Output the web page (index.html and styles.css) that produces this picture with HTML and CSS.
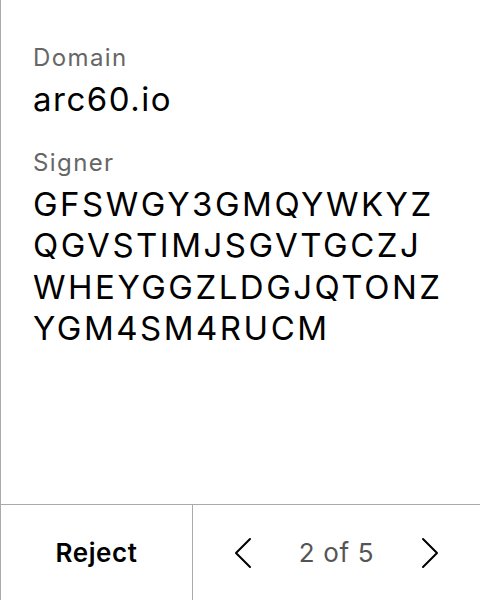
FILE: index.html
```html
<!DOCTYPE html>
<html>
<head>
<meta charset="utf-8">
<link rel="stylesheet" href="styles.css">
</head>
<body>
<div class="frame">
  <div class="content">
    <div class="field">
      <div class="label">Domain</div>
      <div class="value value-domain">arc60.io</div>
    </div>
    <div class="field">
      <div class="label">Signer</div>
      <div class="value value-key">GFSWGY3GMQYWKYZQGVSTIMJSGVTGCZJWHEYGGZLDGJQTONZYGM4SM4RUCM</div>
    </div>
  </div>
  <div class="footer">
    <button class="reject">Reject</button>
    <div class="pager">
      <button class="nav" aria-label="Previous">
        <svg width="18" height="32" viewBox="0 0 18 32"><path d="M16 2 L2 16 L16 30" fill="none" stroke="#000" stroke-width="2" stroke-linecap="round" stroke-linejoin="round"/></svg>
      </button>
      <span class="count">2 of 5</span>
      <button class="nav" aria-label="Next">
        <svg width="18" height="32" viewBox="0 0 18 32"><path d="M2 2 L16 16 L2 30" fill="none" stroke="#000" stroke-width="2" stroke-linecap="round" stroke-linejoin="round"/></svg>
      </button>
    </div>
  </div>
</div>
</body>
</html>
```

FILE: styles.css
```css
html, body {
  margin: 0;
  padding: 0;
  background: #fff;
}
body {
  font-family: Inter, "Noto Sans", sans-serif;
  color: #000;
}
.frame {
  height: 600px;
  border-left: 1px solid #aaa;
  display: flex;
  flex-direction: column;
  box-sizing: border-box;
}
.content {
  flex: 1;
  padding: 41px 32px 0;
  display: flex;
  flex-direction: column;
  gap: 25px;
}
.field {
  display: flex;
  flex-direction: column;
  gap: 4px;
}
.label {
  font-size: 24px;
  line-height: 34px;
  letter-spacing: 1.4px;
  color: #666;
}
.value {
  font-size: 33px;
  line-height: 41.5px;
  color: #000;
}
.value-domain {
  letter-spacing: 1.5px;
}
.value-key {
  width: 414px;
  letter-spacing: 2.5px;
  word-break: break-all;
}
.footer {
  height: 96px;
  border-top: 1px solid #aaa;
  display: grid;
  grid-template-columns: 192px 1fr;
  box-sizing: border-box;
}
button {
  font-family: inherit;
  background: none;
  border: none;
  padding: 0;
  margin: 0;
  cursor: pointer;
}
.reject {
  font-size: 26px;
  font-weight: 600;
  letter-spacing: 0.6px;
  color: #000;
  border-right: 1px solid #aaa;
}
.pager {
  display: flex;
  align-items: center;
  justify-content: space-between;
  padding: 0 41px;
}
.nav {
  display: flex;
  align-items: center;
}
.count {
  font-size: 26px;
  letter-spacing: 0.7px;
  color: #555;
}
```
